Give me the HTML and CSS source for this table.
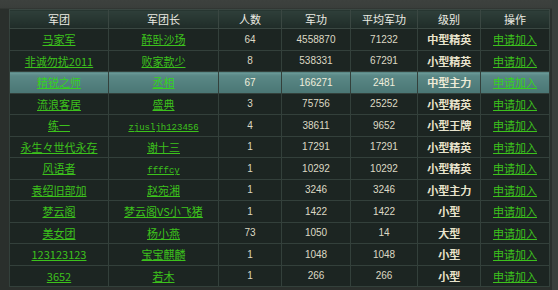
FILE: index.html
```html
<!DOCTYPE html>
<html lang="zh-CN">
<head>
<meta charset="utf-8">
<title>军团列表</title>
<link rel="stylesheet" href="styles.css">
</head>
<body>
<div class="frame">
  <table class="legion">
    <colgroup>
      <col class="c-name"><col class="c-leader"><col class="c-num"><col class="c-merit"><col class="c-avg"><col class="c-level"><col class="c-op">
    </colgroup>
    <thead>
      <tr><th>军团</th><th>军团长</th><th>人数</th><th>军功</th><th>平均军功</th><th>级别</th><th>操作</th></tr>
    </thead>
    <tbody>
      <tr><td><a href="#">马家军</a></td><td><a href="#">醉卧沙场</a></td><td class="n">64</td><td class="n">4558870</td><td class="n">71232</td><td class="lv">中型精英</td><td><a href="#">申请加入</a></td></tr>
      <tr><td><a href="#">非诚勿扰2011</a></td><td><a href="#">败家款少</a></td><td class="n">8</td><td class="n">538331</td><td class="n">67291</td><td class="lv">小型精英</td><td><a href="#">申请加入</a></td></tr>
      <tr class="active"><td><a href="#">精锐之师</a></td><td><a href="#">丞相</a></td><td class="n">67</td><td class="n">166271</td><td class="n">2481</td><td class="lv">中型主力</td><td><a href="#">申请加入</a></td></tr>
      <tr><td><a href="#">流浪客居</a></td><td><a href="#">盛典</a></td><td class="n">3</td><td class="n">75756</td><td class="n">25252</td><td class="lv">小型精英</td><td><a href="#">申请加入</a></td></tr>
      <tr><td><a href="#">练一</a></td><td><a href="#" class="mono">zjusljh123456</a></td><td class="n">4</td><td class="n">38611</td><td class="n">9652</td><td class="lv">小型王牌</td><td><a href="#">申请加入</a></td></tr>
      <tr><td><a href="#">永生々世代永存</a></td><td><a href="#">谢十三</a></td><td class="n">1</td><td class="n">17291</td><td class="n">17291</td><td class="lv">小型精英</td><td><a href="#">申请加入</a></td></tr>
      <tr><td><a href="#">风语者</a></td><td><a href="#" class="mono">ffffcy</a></td><td class="n">1</td><td class="n">10292</td><td class="n">10292</td><td class="lv">小型精英</td><td><a href="#">申请加入</a></td></tr>
      <tr><td><a href="#">袁绍旧部加</a></td><td><a href="#">赵宛湘</a></td><td class="n">1</td><td class="n">3246</td><td class="n">3246</td><td class="lv">小型主力</td><td><a href="#">申请加入</a></td></tr>
      <tr><td><a href="#">梦云阁</a></td><td><a href="#">梦云阁VS小飞猪</a></td><td class="n">1</td><td class="n">1422</td><td class="n">1422</td><td class="lv">小型</td><td><a href="#">申请加入</a></td></tr>
      <tr><td><a href="#">美女团</a></td><td><a href="#">杨小燕</a></td><td class="n">73</td><td class="n">1050</td><td class="n">14</td><td class="lv">大型</td><td><a href="#">申请加入</a></td></tr>
      <tr><td><a href="#">123123123</a></td><td><a href="#">宝宝麒麟</a></td><td class="n">1</td><td class="n">1048</td><td class="n">1048</td><td class="lv">小型</td><td><a href="#">申请加入</a></td></tr>
      <tr><td><a href="#">3652</a></td><td><a href="#">若木</a></td><td class="n">1</td><td class="n">266</td><td class="n">266</td><td class="lv">小型</td><td><a href="#">申请加入</a></td></tr>
    </tbody>
  </table>
</div>
</body>
</html>
```
FILE: styles.css
```css
html, body {
  margin: 0;
  padding: 0;
  background: #2c312e;
}
body {
  width: 558px;
  height: 290px;
  overflow: hidden;
  font-family: "Liberation Sans", "Noto Sans CJK SC", sans-serif;
}
.frame {
  height: 290px;
  box-sizing: border-box;
  padding: 9px 0 0 9px;
  background:
    linear-gradient(#3d413e 0, #3a3e3b 8px, #2a2f2c 9px, #2a2f2c 100%);
  border-right: 6px solid #3a3f3c;
}
.legion {
  width: 540px;
  table-layout: fixed;
  border-collapse: collapse;
  border: 1px solid #46524d;
  background: #1c2522;
}
.c-name { width: 99px; }
.c-leader { width: 110px; }
.c-num { width: 63px; }
.c-merit { width: 69px; }
.c-avg { width: 67px; }
.c-level { width: 63px; }
.c-op { width: 69px; }

.legion th {
  height: 18px;
  padding: 0;
  font-family: "Noto Sans CJK SC", sans-serif;
  font-size: 11px;
  font-weight: normal;
  color: #ecece4;
  text-align: center;
  background: linear-gradient(#2f3f3a, #1f2c28);
  border: 1px solid #3a4742;
}
.legion td {
  height: 20.5px;
  padding: 0;
  text-align: center;
  font-size: 11px;
  font-family: "Noto Sans CJK SC", sans-serif;
  color: #dcdac6;
  border: 1px solid #33403b;
  white-space: nowrap;
  overflow: hidden;
}
.legion a {
  color: #3cc21c;
  text-decoration: underline;
  text-underline-offset: 1px;
}
.legion a.mono {
  font-family: "Liberation Mono", monospace;
  font-size: 9px;
}
.legion td.n {
  font-family: "Liberation Sans", sans-serif;
  font-size: 10px;
  color: #dcd9c4;
}
.legion td.lv {
  font-weight: normal;
  color: #ece8d2;
  text-shadow: 0.4px 0 0 #ece8d2;
}
.legion tr.active td {
  background: linear-gradient(#6f9e9c 0, #5a8886 3px, #4a7674 100%);
  border-top-color: #7aa6a3;
}
.legion tr.active a {
  color: #35d21c;
}
.legion tr.active td.n,
.legion tr.active td.lv {
  color: #f0eedc;
}
```
